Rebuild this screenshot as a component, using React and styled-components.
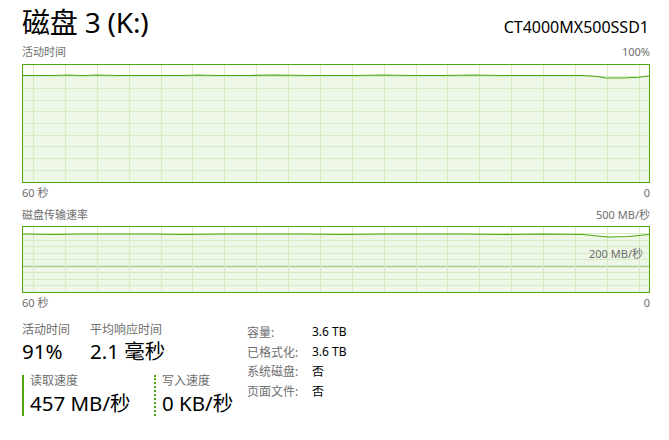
import React from "react";
import styled, { createGlobalStyle } from "styled-components";

const Colors = {
  border: "#4da60c",
  fill: "#eef6e7",
  grid: "#d4ebc4",
  gridStrong: "#a9cf8f",
  label: "#6e6e6e",
  text: "#000000",
};

const GlobalStyle = createGlobalStyle`
  html, body {
    margin: 0;
    padding: 0;
    background: #ffffff;
  }
  body {
    font-family: "Noto Sans", "Noto Sans CJK SC", sans-serif;
    color: ${Colors.text};
  }
`;

const Page = styled.div`
  width: 669px;
  height: 440px;
  padding: 5px 19px 0 22px;
  box-sizing: border-box;
  overflow: hidden;
`;

const Header = styled.div`
  display: flex;
  align-items: baseline;
  justify-content: space-between;
  height: 34px;
`;

const Title = styled.h1`
  margin: 0;
  font-size: 28px;
  font-weight: 400;
  line-height: 34px;
  letter-spacing: -0.2px;
`;

const Model = styled.span`
  font-size: 16px;
  line-height: 20px;
  margin-right: 1px;
`;

const AxisRow = styled.div`
  display: flex;
  justify-content: space-between;
  font-size: 11px;
  line-height: 16px;
  color: ${Colors.label};
  margin-top: ${(p) => p.$top || 0}px;
`;

const ChartBox = styled.div`
  position: relative;
  height: ${(p) => p.$height}px;
  border: 1px solid ${Colors.border};
  background: #ffffff;
  margin-top: ${(p) => p.$top || 0}px;

  svg {
    display: block;
  }
`;

const ChartNote = styled.span`
  position: absolute;
  right: 6px;
  top: 19px;
  font-size: 11px;
  line-height: 16px;
  color: ${Colors.label};
`;

const Bottom = styled.div`
  display: flex;
  margin-top: 11px;
`;

const LeftStats = styled.div`
  width: 225px;
`;

const StatRow = styled.div`
  display: flex;
`;

const Stat = styled.div`
  width: ${(p) => p.$width}px;
`;

const StatLabel = styled.div`
  font-size: 12px;
  line-height: 16px;
  color: ${Colors.label};
`;

const StatValue = styled.div`
  font-size: 20.5px;
  line-height: 26px;
  white-space: nowrap;
`;

const SpeedRow = styled.div`
  display: flex;
  margin-top: 11px;
`;

const Speed = styled.div`
  width: ${(p) => p.$width}px;
  box-sizing: border-box;
  padding-left: 6px;
  border-left: 2px ${(p) => (p.$dotted ? "dotted" : "solid")} ${Colors.border};
  height: 41px;

  ${StatLabel} {
    margin-top: -2px;
  }
  ${StatValue} {
    margin-top: 1px;
  }
`;

const InfoTable = styled.div`
  display: grid;
  grid-template-columns: 65px auto;
  grid-auto-rows: 19.7px;
  align-items: center;
  font-size: 12px;
`;

const InfoKey = styled.span`
  color: ${Colors.label};
`;

const InfoVal = styled.span`
  color: ${Colors.text};
`;

function Chart({ width, height, points, strongLine }) {
  const verticals = [];
  for (let k = 0; k < 20; k++) {
    const x = Math.round(10 + 31.875 * k) + 0.5;
    if (x < width) verticals.push(x);
  }
  const horizontals = [];
  for (let k = 1; k < 10; k++) {
    horizontals.push({ y: Math.floor((height / 10) * k) + 0.5, strong: k === strongLine });
  }
  const line = points.map(([x, y], i) => `${i ? "L" : "M"}${x} ${y}`).join(" ");
  const area = `${line} L${width} ${height} L0 ${height} Z`;

  return (
    <svg width={width} height={height} viewBox={`0 0 ${width} ${height}`}>
      <path d={area} fill={Colors.fill} />
      {horizontals.map((h) => (
        <line
          key={h.y}
          x1="0"
          x2={width}
          y1={h.y}
          y2={h.y}
          stroke={h.strong ? Colors.gridStrong : Colors.grid}
          strokeWidth={h.strong ? 1.4 : 1}
        />
      ))}
      {verticals.map((x) => (
        <line key={x} x1={x} x2={x} y1="0" y2={height} stroke={Colors.grid} strokeWidth="1" />
      ))}
      <path d={line} fill="none" stroke={Colors.border} strokeWidth="1.1" />
    </svg>
  );
}

const activePoints = [
  [0, 10.5], [30, 10.5], [45, 10], [60, 10.5], [75, 10], [95, 10.5], [130, 10.5],
  [160, 10.5], [175, 10], [195, 10.5], [225, 10.5], [250, 10], [290, 10.5],
  [330, 10.5], [360, 10], [390, 10.5], [420, 10.5], [450, 10], [480, 10.5],
  [520, 10.5], [560, 10.5], [575, 11.5], [582, 13], [600, 13], [615, 12.2], [626, 11],
];

const transferPoints = [
  [0, 7], [30, 7.5], [60, 7], [100, 7], [130, 7], [160, 7.5], [200, 7],
  [240, 7], [280, 7], [320, 7.5], [360, 7], [400, 7], [440, 7], [480, 7.5],
  [520, 7], [560, 7.5], [575, 9], [585, 10], [605, 9.5], [626, 7.5],
];

export default function App() {
  return (
    <Page>
      <GlobalStyle />
      <Header>
        <Title>磁盘 3 (K:)</Title>
        <Model>CT4000MX500SSD1</Model>
      </Header>

      <AxisRow $top={5}>
        <span>活动时间</span>
        <span>100%</span>
      </AxisRow>
      <ChartBox $height={117} $top={4}>
        <Chart width={626} height={117} points={activePoints} />
      </ChartBox>
      <AxisRow $top={2}>
        <span>60 秒</span>
        <span>0</span>
      </AxisRow>

      <AxisRow $top={6}>
        <span>磁盘传输速率</span>
        <span>500 MB/秒</span>
      </AxisRow>
      <ChartBox $height={65} $top={3}>
        <Chart width={626} height={65} points={transferPoints} strongLine={6} />
        <ChartNote>200 MB/秒</ChartNote>
      </ChartBox>
      <AxisRow $top={2}>
        <span>60 秒</span>
        <span>0</span>
      </AxisRow>

      <Bottom>
        <LeftStats>
          <StatRow>
            <Stat $width={68}>
              <StatLabel>活动时间</StatLabel>
              <StatValue>91%</StatValue>
            </Stat>
            <Stat $width={120}>
              <StatLabel>平均响应时间</StatLabel>
              <StatValue>2.1 毫秒</StatValue>
            </Stat>
          </StatRow>
          <SpeedRow>
            <Speed $width={132}>
              <StatLabel>读取速度</StatLabel>
              <StatValue>457 MB/秒</StatValue>
            </Speed>
            <Speed $width={90} $dotted>
              <StatLabel>写入速度</StatLabel>
              <StatValue>0 KB/秒</StatValue>
            </Speed>
          </SpeedRow>
        </LeftStats>

        <InfoTable>
          <InfoKey>容量:</InfoKey>
          <InfoVal>3.6 TB</InfoVal>
          <InfoKey>已格式化:</InfoKey>
          <InfoVal>3.6 TB</InfoVal>
          <InfoKey>系统磁盘:</InfoKey>
          <InfoVal>否</InfoVal>
          <InfoKey>页面文件:</InfoKey>
          <InfoVal>否</InfoVal>
        </InfoTable>
      </Bottom>
    </Page>
  );
}
